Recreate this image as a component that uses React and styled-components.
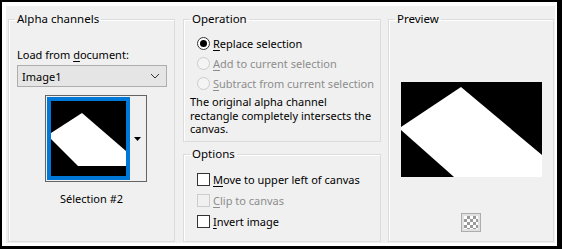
import React from 'react';
import styled, { createGlobalStyle } from 'styled-components';

const GlobalStyle = createGlobalStyle`
  html, body {
    margin: 0;
    padding: 0;
    background: #fff;
  }
  body {
    font-family: "Noto Sans", "Open Sans", sans-serif;
    font-size: 11px;
    color: #000;
    white-space: nowrap;
  }
`;

const Frame = styled.div`
  width: 562px;
  height: 249px;
  box-sizing: border-box;
  background: #000;
  padding: 2px 5px 3px 2px;
`;

const Inner = styled.div`
  height: 100%;
  box-sizing: border-box;
  background: #fff;
  padding: 4px 2px 3px 4px;
`;

const Dialog = styled.div`
  height: 100%;
  box-sizing: border-box;
  background: #f0f0f0;
  display: flex;
  padding: 5px 0 1px 2px;
`;

const Column = styled.div`
  display: flex;
  flex-direction: column;
  gap: 4px;
  width: ${({ w }) => w}px;
  margin-right: ${({ mr }) => mr || 0}px;
`;

const Group = styled.fieldset`
  margin: 0;
  padding: 0;
  min-width: 0;
  border: 1px solid #dcdcdc;
  box-shadow: inset 1px 1px 0 #fff;
  height: ${({ h }) => h}px;
  box-sizing: border-box;
  legend {
    margin-left: 6px;
    padding: 0 2px;
    line-height: 16px;
    font-size: 11.5px;
  }
`;

const Body = styled.div`
  display: flex;
  flex-direction: column;
  align-items: ${({ center }) => (center ? 'center' : 'stretch')};
  padding: ${({ pad }) => pad};
`;

const Label = styled.div`
  line-height: 16px;
  color: ${({ disabled }) => (disabled ? '#8d8d8d' : '#000')};
  text-align: ${({ center }) => (center ? 'center' : 'left')};
  margin-top: ${({ mt }) => mt || 0}px;
  margin-left: ${({ ml }) => ml || 0}px;
  u { text-decoration: underline; text-underline-offset: 2px; }
`;

const Combo = styled.div`
  margin-top: 2px;
  width: 150px;
  height: 22px;
  box-sizing: border-box;
  border: 1px solid #adadad;
  background: #e5e5e5;
  display: flex;
  align-items: center;
  justify-content: space-between;
  padding: 0 6px 0 4px;
`;

const Thumb = styled.div`
  margin-top: 8px;
  align-self: center;
  display: flex;
  border: 1px solid #646464;
  padding: 1px;
  background: #f0f0f0;
`;

const ThumbImage = styled.div`
  width: 75px;
  height: 75px;
  border: 4px solid #0078d7;
  background: #000;
  svg { display: block; }
`;

const ThumbButton = styled.div`
  width: 15px;
  display: flex;
  align-items: center;
  justify-content: center;
`;

const OptionRow = styled.div`
  display: flex;
  align-items: center;
  height: ${({ h }) => h}px;
  gap: 3px;
  color: ${({ disabled }) => (disabled ? '#8d8d8d' : '#000')};
  u { text-decoration: underline; text-underline-offset: 2px; }
`;

const Radio = styled.span`
  flex: none;
  width: 13px;
  height: 13px;
  box-sizing: border-box;
  border-radius: 50%;
  border: 1px solid ${({ disabled }) => (disabled ? '#cccccc' : '#333')};
  background: ${({ disabled }) => (disabled ? '#f4f4f4' : '#fff')};
  display: flex;
  align-items: center;
  justify-content: center;
  &::after {
    content: '';
    width: 7px;
    height: 7px;
    border-radius: 50%;
    background: #000;
    display: ${({ checked }) => (checked ? 'block' : 'none')};
  }
`;

const Check = styled.span`
  flex: none;
  width: 13px;
  height: 13px;
  box-sizing: border-box;
  border: 1px solid ${({ disabled }) => (disabled ? '#cccccc' : '#333')};
  background: ${({ disabled }) => (disabled ? '#f0f0f0' : '#fff')};
`;

const Description = styled.div`
  margin: 2px 0 0 -7px;
  line-height: 13.5px;
`;

const PreviewBox = styled.div`
  margin-top: 55px;
  width: 141px;
  height: 95px;
  background: #000;
  svg { display: block; }
`;

const CheckerButton = styled.div`
  margin-top: 36px;
  width: 20px;
  height: 19px;
  box-sizing: border-box;
  border: 1px solid #adadad;
  background: #e1e1e1;
  padding: 2px;
  span {
    display: block;
    width: 100%;
    height: 100%;
    background-color: #fff;
    background-image:
      linear-gradient(45deg, #9a9a9a 25%, transparent 25%, transparent 75%, #9a9a9a 75%),
      linear-gradient(45deg, #9a9a9a 25%, transparent 25%, transparent 75%, #9a9a9a 75%);
    background-size: 6px 6px;
    background-position: 0 0, 3px 3px;
  }
`;

const Chevron = () => (
  <svg width="10" height="6" viewBox="0 0 10 6">
    <path d="M1 1 L5 5 L9 1" fill="none" stroke="#333" strokeWidth="1" />
  </svg>
);

const Caret = () => (
  <svg width="7" height="4" viewBox="0 0 7 4">
    <polygon points="0,0 7,0 3.5,4" fill="#000" />
  </svg>
);

const App = () => (
  <>
    <GlobalStyle />
    <Frame>
      <Inner>
        <Dialog>
          <Column w={167} mr={8}>
            <Group h={231}>
              <legend>Alpha channels</legend>
              <Body pad="20px 0 0 8px">
                <Label>Load from <u>d</u>ocument:</Label>
                <Combo>
                  <span>Image1</span>
                  <Chevron />
                </Combo>
                <Thumb>
                  <ThumbImage>
                    <svg width="75" height="75" viewBox="0 0 75 75">
                      <polygon points="31,12 75,50 75,65 27,65 0,38 0,32" fill="#fff" />
                    </svg>
                  </ThumbImage>
                  <ThumbButton>
                    <Caret />
                  </ThumbButton>
                </Thumb>
                <Label center mt={9} ml={-8}>Sélection #2</Label>
              </Body>
            </Group>
          </Column>
          <Column w={198} mr={7}>
            <Group h={131}>
              <legend>Operation</legend>
              <Body pad="6px 0 0 13px">
                <OptionRow h={20}>
                  <Radio checked />
                  <span><u>R</u>eplace selection</span>
                </OptionRow>
                <OptionRow h={20} disabled>
                  <Radio disabled />
                  <span><u>A</u>dd to current selection</span>
                </OptionRow>
                <OptionRow h={20} disabled>
                  <Radio disabled />
                  <span><u>S</u>ubtract from current selection</span>
                </OptionRow>
                <Description>
                  The original alpha channel<br />
                  rectangle completely intersects the<br />
                  canvas.
                </Description>
              </Body>
            </Group>
            <Group h={96}>
              <legend>Options</legend>
              <Body pad="7px 0 0 13px">
                <OptionRow h={21}>
                  <Check />
                  <span><u>M</u>ove to upper left of canvas</span>
                </OptionRow>
                <OptionRow h={21} disabled>
                  <Check disabled />
                  <span><u>C</u>lip to canvas</span>
                </OptionRow>
                <OptionRow h={21}>
                  <Check />
                  <span><u>I</u>nvert image</span>
                </OptionRow>
              </Body>
            </Group>
          </Column>
          <Column w={166}>
            <Group h={231}>
              <legend>Preview</legend>
              <Body center>
                <PreviewBox>
                  <svg width="141" height="95" viewBox="0 0 141 95">
                    <polygon points="60,5 141,73 141,95 53,95 0,48 0,45" fill="#fff" />
                  </svg>
                </PreviewBox>
                <CheckerButton>
                  <span />
                </CheckerButton>
              </Body>
            </Group>
          </Column>
        </Dialog>
      </Inner>
    </Frame>
  </>
);

export default App;
